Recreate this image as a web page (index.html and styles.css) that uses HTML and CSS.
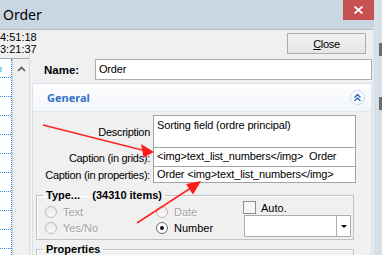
FILE: index.html
```html
<!DOCTYPE html>
<html lang="en">
    <head>
        <meta charset="UTF-8" />
        <title>Order</title>
        <link rel="stylesheet" href="styles.css">
    </head>
    <body>
        <div class="screen">
            <div class="window">
                <div class="titlebar">
                    <span class="title">Order</span>
                    <span class="close-x">
                        <svg width="9" height="8" viewBox="0 0 9 8"><path d="M0.5 0.5 L8.5 7.5 M8.5 0.5 L0.5 7.5" stroke="#fff" stroke-width="1.7" /></svg>
                    </span>
                </div>
                <div class="client">
                    <div class="side">
                        <div class="stamps">
                            <div>4:51:18</div>
                            <div>3:21:37</div>
                        </div>
                        <div class="list">
                            <div class="cells">
                                <div><span class="sel"></span></div>
                                <div></div><div></div><div></div><div></div>
                                <div></div><div></div><div></div><div></div><div></div>
                            </div>
                            <div class="scroll">
                                <div class="scroll-up">
                                    <svg width="9" height="6" viewBox="0 0 9 6"><polyline points="1,5 4.5,1.5 8,5" fill="none" stroke="#5a5a5a" stroke-width="1.6" /></svg>
                                </div>
                            </div>
                        </div>
                    </div>

                    <div class="main">
                        <div class="toolbar">
                            <button class="btn"><u>C</u>lose</button>
                        </div>
                        <div class="name-row">
                            <label class="name-label">Name:</label>
                            <div class="input">Order</div>
                        </div>

                        <div class="panel">
                            <div class="panel-head">
                                <span class="panel-title">General</span>
                                <span class="collapse">
                                    <svg width="15" height="15" viewBox="0 0 15 15">
                                        <circle cx="7.5" cy="7.5" r="7" fill="#fff" stroke="#c4d6ea" />
                                        <polyline points="4.5,7.5 7.5,4.5 10.5,7.5" fill="none" stroke="#2e6fc2" stroke-width="1.5" />
                                        <polyline points="4.5,11 7.5,8 10.5,11" fill="none" stroke="#2e6fc2" stroke-width="1.5" />
                                    </svg>
                                </span>
                            </div>
                            <div class="panel-body">
                                <div class="fields">
                                    <label class="field-label">Description</label>
                                    <div class="cell desc">Sorting field (ordre principal)</div>
                                    <label class="field-label">Caption (in grids):</label>
                                    <div class="cell grids">&lt;img&gt;text_list_numbers&lt;/img&gt;&nbsp; Order</div>
                                    <label class="field-label">Caption (in properties):</label>
                                    <div class="cell props">Order &lt;img&gt;text_list_numbers&lt;/img&gt;</div>
                                </div>

                                <fieldset class="group">
                                    <legend>Type...&nbsp;&nbsp;&nbsp; (34310 items)</legend>
                                    <div class="type-body">
                                        <div class="col col-a">
                                            <div class="radio off"><i></i>Text</div>
                                            <div class="radio off"><i></i>Yes/No</div>
                                        </div>
                                        <div class="col col-b">
                                            <div class="radio off"><i></i>Date</div>
                                            <div class="radio on"><i></i>Number</div>
                                        </div>
                                        <div class="col col-c">
                                            <div class="check"><i></i>Auto.</div>
                                            <div class="combo">
                                                <span class="combo-text"></span>
                                                <span class="combo-btn"><b></b></span>
                                            </div>
                                        </div>
                                    </div>
                                </fieldset>

                                <fieldset class="group props-group">
                                    <legend>Properties</legend>
                                </fieldset>
                            </div>
                        </div>
                    </div>
                </div>
            </div>
            <div class="outside"><i class="mark-a"></i><i class="mark-b"></i></div>

            <!-- red arrows drawn over the form -->
            <svg class="arrows" width="382" height="255" viewBox="0 0 382 255">
                <line x1="43" y1="125" x2="142" y2="150" stroke="#ff2424" stroke-width="1.5" />
                <polygon points="154,152 141,144 143.5,157.5" fill="#ff1a1a" />
                <line x1="137" y1="223" x2="190" y2="188.5" stroke="#ff2424" stroke-width="1.5" />
                <polygon points="201,181 186,184 193,194.5" fill="#ff1a1a" />
            </svg>
        </div>
    </body>
</html>
```

FILE: styles.css
```css
* {
    box-sizing: border-box;
}
body {
    margin: 0;
    font-family: "Liberation Sans", Arial, sans-serif;
    font-size: 11px;
    color: #000;
    background-color: #d6e0e9;
}
.screen {
    position: relative;
    display: flex;
    width: 382px;
    height: 255px;
    overflow: hidden;
}
.window {
    width: 374px;
    display: flex;
    flex-direction: column;
}
.titlebar {
    height: 29px;
    background-color: #c9d7e3;
    display: flex;
    align-items: flex-start;
}
.title {
    font-family: "Noto Sans", sans-serif;
    font-size: 14px;
    line-height: 20px;
    padding: 5px 0 0 3px;
}
.close-x {
    margin-left: auto;
    width: 31px;
    height: 20px;
    background-color: #c75050;
    display: flex;
    align-items: center;
    justify-content: center;
}
.client {
    flex: 1;
    display: flex;
    min-height: 0;
    background-color: #f0f0f0;
    border-top: 1px solid #b3bdc7;
    border-right: 2px solid #e4eaf0;
}

/* left list */
.side {
    width: 30px;
    display: flex;
    flex-direction: column;
    border-right: 1px solid #d3dae1;
}
.stamps {
    height: 28px;
    padding-top: 1px;
    line-height: 12px;
    white-space: nowrap;
}
.list {
    flex: 1;
    display: flex;
    border-top: 1px solid #a9a9a9;
}
.cells {
    width: 12px;
    background-color: #fff;
    border-right: 1px dotted #2b8fe8;
}
.cells div {
    height: 19px;
    border-bottom: 1px dotted #2b8fe8;
    padding-top: 8px;
}
.sel {
    display: block;
    width: 2px;
    height: 5px;
    background-color: #9ccff2;
}
.scroll {
    width: 17px;
    border-left: 1px solid #d4d4d4;
    background-color: #f0f0f0;
}
.scroll-up {
    height: 20px;
    display: flex;
    align-items: center;
    justify-content: center;
}

/* main area */
.main {
    width: 342px;
    display: flex;
    flex-direction: column;
}
.toolbar {
    height: 29px;
    display: flex;
    justify-content: flex-end;
    padding: 3px 6px 0 0;
}
.btn {
    width: 79px;
    height: 21px;
    padding: 0;
    border: 1px solid #adadad;
    background: linear-gradient(#f2f2f2, #e5e5e5);
    font-family: "Liberation Sans", Arial, sans-serif;
    font-size: 11px;
    letter-spacing: -0.3px;
    color: #000;
}
.name-row {
    height: 21px;
    display: flex;
    align-items: center;
    padding-left: 14px;
}
.name-label {
    width: 51px;
    font-weight: bold;
    font-size: 11.5px;
}
.input {
    width: 277px;
    height: 21px;
    border: 1px solid #abadb3;
    background-color: #fff;
    padding: 0 0 0 3px;
    line-height: 19px;
    letter-spacing: -0.2px;
}
.panel {
    flex: 1;
    margin: 3px 0 0 2px;
    border: 1px solid #d9e1ea;
    border-bottom: none;
    display: flex;
    flex-direction: column;
    min-height: 0;
}
.panel-head {
    height: 28px;
    flex: none;
    display: flex;
    align-items: center;
    padding: 0 6px 0 14px;
    border-bottom: 1px solid #e1e7ee;
    background: linear-gradient(#fdfeff, #f3f6f9);
}
.panel-title {
    font-family: "Noto Sans", sans-serif;
    font-weight: bold;
    font-size: 11px;
    color: #3372c4;
}
.collapse {
    margin-left: auto;
    height: 15px;
}
.panel-body {
    flex: 1;
    padding-top: 3px;
    overflow: hidden;
}
.fields {
    display: grid;
    grid-template-columns: 117px 203px;
    column-gap: 3px;
}
.field-label {
    align-self: center;
    text-align: right;
    white-space: nowrap;
    letter-spacing: -0.3px;
}
.cell {
    border: 1px solid #a4a4a4;
    background-color: #fff;
    padding-left: 3px;
    white-space: nowrap;
    overflow: hidden;
    letter-spacing: -0.15px;
}
.desc {
    height: 33px;
    padding-top: 3px;
    line-height: 13px;
}
.grids {
    height: 20px;
    margin-top: -1px;
    line-height: 17px;
}
.props {
    height: 17px;
    margin-top: -1px;
    line-height: 15px;
}

/* group boxes */
.group {
    margin: 6px 0 0 3px;
    width: 318px;
    padding: 0 0 2px;
    border: 1px solid #c2c2c2;
    box-shadow: inset 1px 1px 0 #fff;
    min-width: 0;
}
.group legend {
    margin-left: 6px;
    padding: 0 3px;
    font-weight: bold;
    line-height: 13px;
}
.props-group {
    margin-top: 3px;
    height: 30px;
}
.type-body {
    display: flex;
    padding-left: 8px;
}
.col-a,
.col-b {
    margin-top: 2px;
}
.col-a {
    width: 111px;
}
.col-b {
    width: 87px;
}
.radio {
    height: 16px;
    display: flex;
    align-items: center;
    gap: 6px;
}
.radio i {
    width: 12px;
    height: 12px;
    border-radius: 50%;
    border: 1px solid #bcbcbc;
    background: linear-gradient(#ebebeb, #fafafa);
    display: flex;
    align-items: center;
    justify-content: center;
}
.radio.off {
    color: #a3a3a3;
    text-shadow: 1px 1px 0 #fff;
}
.radio.on i {
    border-color: #6a6a6a;
    background: #fff;
}
.radio.on i::after {
    content: "";
    width: 4px;
    height: 4px;
    border-radius: 50%;
    background-color: #111;
}
.col-c {
    margin-top: -1px;
}
.check {
    height: 13px;
    display: flex;
    align-items: center;
    gap: 5px;
}
.check i {
    width: 13px;
    height: 13px;
    border: 1px solid #8e8f8f;
    background-color: #f7f7f7;
}
.combo {
    margin: 1px 0 0 1px;
    width: 107px;
    height: 22px;
    display: flex;
    border: 1px solid #abadb3;
    background-color: #fff;
}
.combo-text {
    flex: 1;
}
.combo-btn {
    width: 14px;
    border-left: 1px solid #abadb3;
    display: flex;
    align-items: center;
    justify-content: center;
}
.combo-btn b {
    width: 0;
    height: 0;
    border-left: 3px solid transparent;
    border-right: 3px solid transparent;
    border-top: 3px solid #000;
}

/* desktop strip right of the window */
.outside {
    width: 8px;
    display: flex;
    flex-direction: column;
    align-items: flex-end;
}
.outside i {
    display: block;
    width: 3px;
    height: 13px;
    background-color: #6b6b6b;
}
.mark-a {
    margin-top: 43px;
}
.mark-b {
    margin-top: 41px;
}
.arrows {
    position: absolute;
    left: 0;
    top: 0;
    pointer-events: none;
}
```
